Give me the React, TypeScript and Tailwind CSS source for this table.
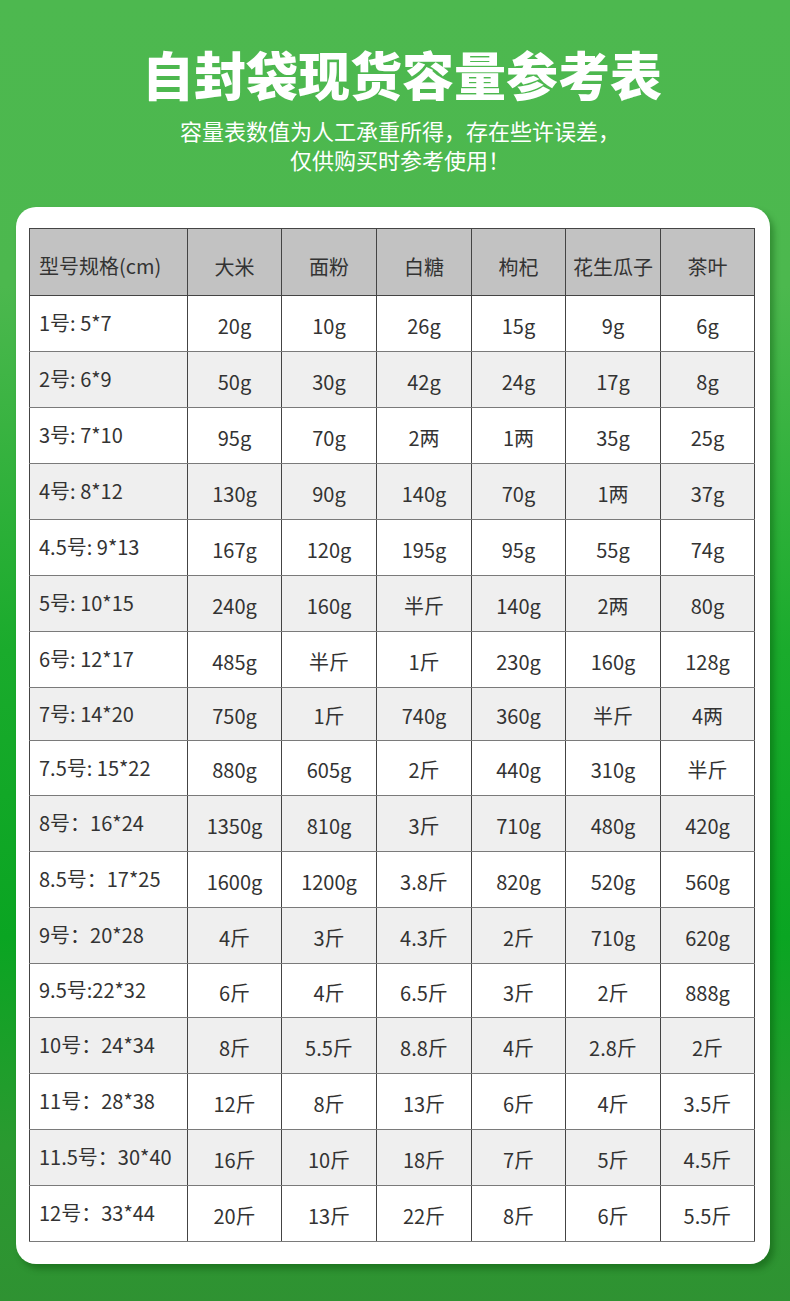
const headers = ['大米', '面粉', '白糖', '枸杞', '花生瓜子', '茶叶'];

// size label, row height, values
const rows: { label: string; h: number; v: string[] }[] = [
  { label: '1号: 5*7', h: 56, v: ['20g', '10g', '26g', '15g', '9g', '6g'] },
  { label: '2号: 6*9', h: 56, v: ['50g', '30g', '42g', '24g', '17g', '8g'] },
  { label: '3号: 7*10', h: 56, v: ['95g', '70g', '2两', '1两', '35g', '25g'] },
  { label: '4号: 8*12', h: 56, v: ['130g', '90g', '140g', '70g', '1两', '37g'] },
  { label: '4.5号: 9*13', h: 56, v: ['167g', '120g', '195g', '95g', '55g', '74g'] },
  { label: '5号: 10*15', h: 56, v: ['240g', '160g', '半斤', '140g', '2两', '80g'] },
  { label: '6号: 12*17', h: 56, v: ['485g', '半斤', '1斤', '230g', '160g', '128g'] },
  { label: '7号: 14*20', h: 53, v: ['750g', '1斤', '740g', '360g', '半斤', '4两'] },
  { label: '7.5号: 15*22', h: 55, v: ['880g', '605g', '2斤', '440g', '310g', '半斤'] },
  { label: '8号：16*24', h: 56, v: ['1350g', '810g', '3斤', '710g', '480g', '420g'] },
  { label: '8.5号：17*25', h: 56, v: ['1600g', '1200g', '3.8斤', '820g', '520g', '560g'] },
  { label: '9号：20*28', h: 56, v: ['4斤', '3斤', '4.3斤', '2斤', '710g', '620g'] },
  { label: '9.5号:22*32', h: 54, v: ['6斤', '4斤', '6.5斤', '3斤', '2斤', '888g'] },
  { label: '10号：24*34', h: 56, v: ['8斤', '5.5斤', '8.8斤', '4斤', '2.8斤', '2斤'] },
  { label: '11号：28*38', h: 56, v: ['12斤', '8斤', '13斤', '6斤', '4斤', '3.5斤'] },
  { label: '11.5号：30*40', h: 56, v: ['16斤', '10斤', '18斤', '7斤', '5斤', '4.5斤'] },
  { label: '12号：33*44', h: 56, v: ['20斤', '13斤', '22斤', '8斤', '6斤', '5.5斤'] },
];

const colWidths = [158, 94, 95, 95, 94, 95, 94];

export default function App() {
  return (
    <div
      className="w-[790px] h-[1301px] overflow-hidden flex flex-col items-center bg-[linear-gradient(180deg,#4db84f_0%,#4cb84e_22%,#1aab2c_50%,#0aa522_72%,#2a9a30_88%,#2f9232_100%)]"
      style={{ fontFamily: '"Noto Sans CJK SC", "Noto Sans", sans-serif' }}
    >
      <h1 className="pt-[48px] pl-[14px] text-[52px] leading-[52px] font-black text-white">
        自封袋现货容量参考表
      </h1>
      <p className="mt-[16px] pl-[10px] text-[22px] leading-[29px] text-white text-center">
        容量表数值为人工承重所得，存在些许误差，
        <br />
        仅供购买时参考使用！
      </p>

      <div className="mt-[33px] ml-[16px] mr-[20px] self-stretch rounded-[20px] bg-white pl-[13px] pr-[16px] pt-[21px] pb-[22px] shadow-[4px_5px_6px_rgba(0,60,0,0.35)]">
        <table className="border-collapse text-[#333] text-[20px] leading-none table-fixed w-[725px]">
          <colgroup>
            {colWidths.map((w, i) => (
              <col key={i} style={{ width: w }} />
            ))}
          </colgroup>
          <thead>
            <tr className="h-[67px] bg-[#c2c2c2]">
              <th className="border border-[#444] font-normal text-left pl-[9px] pt-[8px]">型号规格(cm)</th>
              {headers.map((h) => (
                <th key={h} className="border border-[#444] font-normal text-center pt-[10px]">
                  {h}
                </th>
              ))}
            </tr>
          </thead>
          <tbody>
            {rows.map((r, i) => (
              <tr key={r.label} className={i % 2 === 1 ? 'bg-[#efefef]' : 'bg-white'} style={{ height: r.h }}>
                <td className="border-x border-x-[#444] border-y border-y-[#7a7a7a] pl-[9px] pb-[1px] whitespace-nowrap">
                  {r.label}
                </td>
                {r.v.map((v, j) => (
                  <td
                    key={j}
                    className="border-x border-x-[#444] border-y border-y-[#7a7a7a] text-center pt-[4px] whitespace-nowrap"
                  >
                    {v}
                  </td>
                ))}
              </tr>
            ))}
          </tbody>
        </table>
      </div>
    </div>
  );
}
